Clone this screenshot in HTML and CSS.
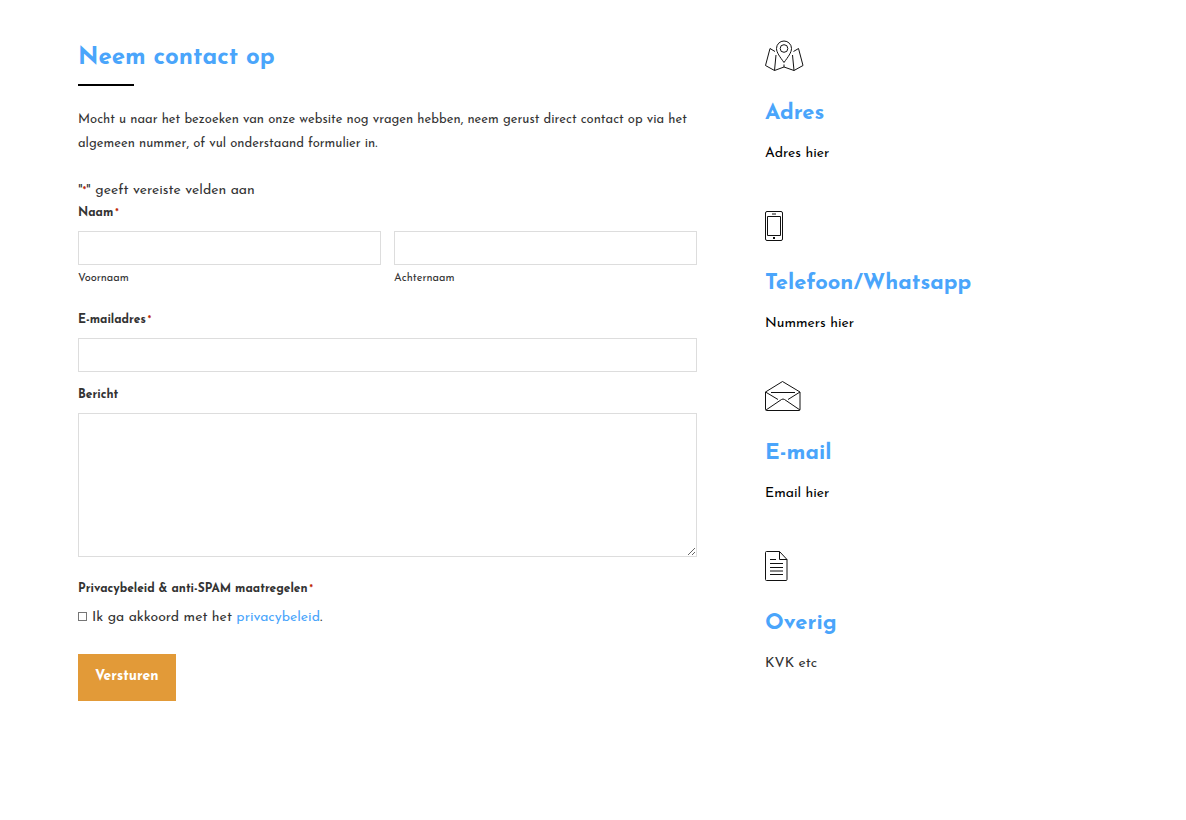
FILE: index.html
```html
<!DOCTYPE html>
<html lang="nl">
<head>
    <meta charset="UTF-8">
    <meta name="viewport" content="width=device-width, initial-scale=1.0">
    <title>Contact</title>
    <link rel="stylesheet" href="styles.css">
</head>
<body>
    <main class="contact">
        <section class="contact-form">
            <h1>Neem contact op</h1>
            <p class="intro">Mocht u naar het bezoeken van onze website nog vragen hebben, neem gerust direct contact op via het algemeen nummer, of vul onderstaand formulier in.</p>

            <form>
                <p class="required-note">"<span class="required">*</span>" geeft vereiste velden aan</p>

                <fieldset class="field name-field">
                    <legend class="label">Naam<span class="required">*</span></legend>
                    <div class="name-row">
                        <div>
                            <input type="text" id="firstName" name="firstName" required>
                            <label class="sub-label" for="firstName">Voornaam</label>
                        </div>
                        <div>
                            <input type="text" id="lastName" name="lastName" required>
                            <label class="sub-label" for="lastName">Achternaam</label>
                        </div>
                    </div>
                </fieldset>

                <div class="field">
                    <label class="label" for="email">E-mailadres<span class="required">*</span></label>
                    <input type="email" id="email" name="email" required>
                </div>

                <div class="field message-field">
                    <label class="label" for="message">Bericht</label>
                    <textarea id="message" name="message"></textarea>
                </div>

                <fieldset class="field consent-field">
                    <legend class="label">Privacybeleid &amp; anti-SPAM maatregelen<span class="required">*</span></legend>
                    <div class="consent">
                        <input type="checkbox" id="consent" name="consent" required>
                        <label for="consent">Ik ga akkoord met het <a href="#">privacybeleid</a>.</label>
                    </div>
                </fieldset>

                <button type="submit">Versturen</button>
            </form>
        </section>

        <aside class="contact-info">
            <div class="info">
                <svg width="40" height="32" viewBox="0 0 40 32" aria-hidden="true">
                    <path d="M19 22.500C15 17 11.500 12.500 11.500 8.500a7.500 7.500 0 0 1 15 0c0 4-3.500 8.500-7.500 14z"/>
                    <circle cx="19" cy="8.500" r="3.800"/>
                    <path d="M10 11.500L5 8.500L.5 25.500L9.500 30.500L19 27L29 30.500L38 25.500L33.500 8.500L28.500 11.500M11 15L9.500 30.500M27.500 15L29 30.500M19 24.500V27"/>
                </svg>
                <h2>Adres</h2>
                <p>Adres hier</p>
            </div>
            <div class="info">
                <svg width="40" height="32" viewBox="0 0 40 32" aria-hidden="true">
                    <rect x=".5" y="1.500" width="17" height="29" rx="1.500"/>
                    <rect x="2.500" y="6.500" width="13" height="19"/>
                    <path d="M7 4H11"/>
                    <rect class="solid" x="8" y="27" width="2" height="2"/>
                </svg>
                <h2>Telefoon/Whatsapp</h2>
                <p>Nummers hier</p>
            </div>
            <div class="info">
                <svg width="40" height="32" viewBox="0 0 40 32" aria-hidden="true">
                    <path d="M.5 12L17.500 1.500L35 12V29.500Q35 30.500 34 30.500H1.500Q.5 30.500 .5 29.500ZM6 12.500H30M.5 12L13 19.500M35 12L23 19.500M1 30L16.500 19.500Q18 18.500 19.500 19.500L35 30"/>
                </svg>
                <h2>E-mail</h2>
                <p>Email hier</p>
            </div>
            <div class="info">
                <svg width="40" height="32" viewBox="0 0 40 32" aria-hidden="true">
                    <path d="M14.500 1.500H1.500Q.5 1.500 .5 2.500V29.500Q.5 30.500 1.500 30.500H21Q22 30.500 22 29.500V9.500L14.500 1.500V9.500H22M5 9.500H11M5 13.500H18M5 17.500H18M5 21H18M5 24.500H18"/>
                </svg>
                <h2>Overig</h2>
                <p class="muted">KVK etc</p>
            </div>
        </aside>
    </main>
</body>
</html>
```
FILE: styles.css
```css
* { box-sizing: border-box; }
body { margin: 0; background: #fff; color: #333; font-family: "Josefin Sans", Lato, sans-serif; font-size: 14px; line-height: 24px; }
h1, h2, p { margin: 0; }
h1, h2 { color: #4aa5fb; font-weight: bold; }
a { color: #4aa5fb; text-decoration: none; }

.contact { display: grid; grid-template-columns: 9fr 5fr; gap: 68px; padding: 40px 77px 40px 78px; }

h1 { padding-top: 2px; font-size: 24px; line-height: 32px; }
h1::after { content: ""; display: block; width: 56px; height: 2px; margin-top: 10px; background: #000; }
.intro { margin: 22px 0 23px; font-size: 13px; }

.required { color: #c02b0a; font-size: 10px; font-weight: bold; line-height: 8px; }
.label .required { margin-left: 2px; }
.field { min-width: 0; margin: 0; padding: 0; border: 0; }
.label { display: block; padding: 0; font-size: 12px; font-weight: bold; line-height: 20px; margin-bottom: 8px; }
.name-field { margin-bottom: 21px; }
.name-row { display: grid; grid-template-columns: 1fr 1fr; gap: 13px; }
.sub-label { display: block; margin-top: 4px; font-size: 11px; line-height: 20px; }

input[type="text"], input[type="email"], textarea { display: block; width: 100%; height: 34px; padding: 8px; border: 1px solid #ddd; border-radius: 0; background: #fff; font: inherit; }
textarea { height: 144px; resize: vertical; }
.message-field { margin-top: 13px; }
.consent-field { margin-top: 22px; }
.consent-field .label { margin-bottom: 7px; }
.consent { display: flex; align-items: center; gap: 5px; }
.consent input { appearance: none; width: 9px; height: 9px; margin: 0 0 3px; border: 1px solid #767676; }
.consent input:checked { background: #4aa5fb; }
button { margin-top: 24px; padding: 0 17px 2px; height: 47px; border: 0; background: #e29a38; color: #fff; font: inherit; font-weight: bold; cursor: pointer; }

.info { margin-bottom: 44px; color: #000; }
.info svg { display: block; fill: none; stroke: #111; stroke-width: 1; stroke-linejoin: round; }
.info .solid { fill: #111; stroke: none; }
.info h2 { margin: 29px 0 15px; font-size: 22px; line-height: 26px; }
.info .muted { color: #333; }
```
